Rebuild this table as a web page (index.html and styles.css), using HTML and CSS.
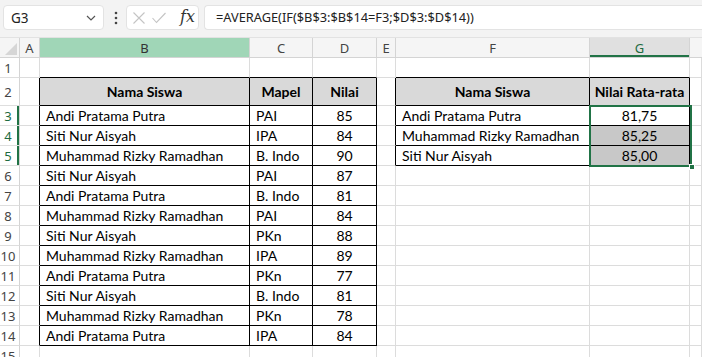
FILE: index.html
```html
<!DOCTYPE html>
<html>
<head>
<meta charset="utf-8">
<link rel="stylesheet" href="styles.css">
</head>
<body>
<div class="app">
  <div class="toolbar">
    <div class="namebox">
      <span class="ref">G3</span>
      <svg class="chev" width="10" height="6" viewBox="0 0 10 6"><path d="M1 1 L5 5 L9 1" fill="none" stroke="#555" stroke-width="1.2"/></svg>
    </div>
    <svg class="dots" width="4" height="14" viewBox="0 0 4 14"><circle cx="2" cy="2" r="1.3" fill="#444"/><circle cx="2" cy="7" r="1.3" fill="#444"/><circle cx="2" cy="12" r="1.3" fill="#444"/></svg>
    <div class="fxbox">
      <svg width="14" height="12" viewBox="0 0 14 12"><path d="M1.5 0.5 L12.5 11.5 M12.5 0.5 L1.5 11.5" stroke="#c4c4c4" stroke-width="1.1" fill="none"/></svg>
      <svg width="14" height="12" viewBox="0 0 14 12"><path d="M0.5 6 L4.5 10.5 L13.5 1" stroke="#c4c4c4" stroke-width="1.1" fill="none"/></svg>
      <span class="fx">fx</span>
    </div>
    <div class="formula">=AVERAGE(IF($B$3:$B$14=F3;$D$3:$D$14))</div>
  </div>

  <div class="sheet">
    <!-- header row -->
    <div class="corner"><svg width="12" height="12" viewBox="0 0 12 12"><path d="M12 0 L12 12 L0 12 Z" fill="#d6d6d6"/></svg></div>
    <div class="ch">A</div>
    <div class="ch hl">B</div>
    <div class="ch">C</div>
    <div class="ch">D</div>
    <div class="ch">E</div>
    <div class="ch">F</div>
    <div class="ch sel">G</div>
    <div class="ch last"></div>

    <!-- row 1 -->
    <div class="rh">1</div>
    <div class="c"></div>
    <div class="c kb"></div>
    <div class="c kb"></div>
    <div class="c kb"></div>
    <div class="c"></div>
    <div class="c kb"></div>
    <div class="c kb"></div>
    <div class="c"></div>

    <!-- row 2 -->
    <div class="rh">2</div>
    <div class="c kr"></div>
    <div class="c k hd">Nama Siswa</div>
    <div class="c k hd">Mapel</div>
    <div class="c k hd">Nilai</div>
    <div class="c kr"></div>
    <div class="c k hd">Nama Siswa</div>
    <div class="c k hd">Nilai Rata-rata</div>
    <div class="c"></div>

    <!-- row 3 -->
    <div class="rh on">3</div>
    <div class="c kr"></div>
    <div class="c k t">Andi Pratama Putra</div>
    <div class="c k t">PAI</div>
    <div class="c k n">85</div>
    <div class="c kr"></div>
    <div class="c k t">Andi Pratama Putra</div>
    <div class="c k n">81,75</div>
    <div class="c"></div>

    <!-- row 4 -->
    <div class="rh on">4</div>
    <div class="c kr"></div>
    <div class="c k t">Siti Nur Aisyah</div>
    <div class="c k t">IPA</div>
    <div class="c k n">84</div>
    <div class="c kr"></div>
    <div class="c k t">Muhammad Rizky Ramadhan</div>
    <div class="c k n shade">85,25</div>
    <div class="c"></div>

    <!-- row 5 -->
    <div class="rh on">5</div>
    <div class="c kr"></div>
    <div class="c k t">Muhammad Rizky Ramadhan</div>
    <div class="c k t">B. Indo</div>
    <div class="c k n">90</div>
    <div class="c kr"></div>
    <div class="c k t">Siti Nur Aisyah</div>
    <div class="c k n shade">85,00</div>
    <div class="c"></div>

    <!-- row 6 -->
    <div class="rh">6</div>
    <div class="c kr"></div>
    <div class="c k t">Siti Nur Aisyah</div>
    <div class="c k t">PAI</div>
    <div class="c k n">87</div>
    <div class="c"></div>
    <div class="c"></div>
    <div class="c"></div>
    <div class="c"></div>

    <!-- row 7 -->
    <div class="rh">7</div>
    <div class="c kr"></div>
    <div class="c k t">Andi Pratama Putra</div>
    <div class="c k t">B. Indo</div>
    <div class="c k n">81</div>
    <div class="c"></div>
    <div class="c"></div>
    <div class="c"></div>
    <div class="c"></div>

    <!-- row 8 -->
    <div class="rh">8</div>
    <div class="c kr"></div>
    <div class="c k t">Muhammad Rizky Ramadhan</div>
    <div class="c k t">PAI</div>
    <div class="c k n">84</div>
    <div class="c"></div>
    <div class="c"></div>
    <div class="c"></div>
    <div class="c"></div>

    <!-- row 9 -->
    <div class="rh">9</div>
    <div class="c kr"></div>
    <div class="c k t">Siti Nur Aisyah</div>
    <div class="c k t">PKn</div>
    <div class="c k n">88</div>
    <div class="c"></div>
    <div class="c"></div>
    <div class="c"></div>
    <div class="c"></div>

    <!-- row 10 -->
    <div class="rh">10</div>
    <div class="c kr"></div>
    <div class="c k t">Muhammad Rizky Ramadhan</div>
    <div class="c k t">IPA</div>
    <div class="c k n">89</div>
    <div class="c"></div>
    <div class="c"></div>
    <div class="c"></div>
    <div class="c"></div>

    <!-- row 11 -->
    <div class="rh">11</div>
    <div class="c kr"></div>
    <div class="c k t">Andi Pratama Putra</div>
    <div class="c k t">PKn</div>
    <div class="c k n">77</div>
    <div class="c"></div>
    <div class="c"></div>
    <div class="c"></div>
    <div class="c"></div>

    <!-- row 12 -->
    <div class="rh">12</div>
    <div class="c kr"></div>
    <div class="c k t">Siti Nur Aisyah</div>
    <div class="c k t">B. Indo</div>
    <div class="c k n">81</div>
    <div class="c"></div>
    <div class="c"></div>
    <div class="c"></div>
    <div class="c"></div>

    <!-- row 13 -->
    <div class="rh">13</div>
    <div class="c kr"></div>
    <div class="c k t">Muhammad Rizky Ramadhan</div>
    <div class="c k t">PKn</div>
    <div class="c k n">78</div>
    <div class="c"></div>
    <div class="c"></div>
    <div class="c"></div>
    <div class="c"></div>

    <!-- row 14 -->
    <div class="rh">14</div>
    <div class="c kr"></div>
    <div class="c k t">Andi Pratama Putra</div>
    <div class="c k t">IPA</div>
    <div class="c k n">84</div>
    <div class="c"></div>
    <div class="c"></div>
    <div class="c"></div>
    <div class="c"></div>

    <!-- row 15 -->
    <div class="rh">15</div>
    <div class="c"></div>
    <div class="c"></div>
    <div class="c"></div>
    <div class="c"></div>
    <div class="c"></div>
    <div class="c"></div>
    <div class="c"></div>
    <div class="c"></div>

    <div class="selection"></div>
    <div class="handle"></div>
  </div>
</div>
</body>
</html>
```

FILE: styles.css
```css
* { box-sizing: border-box; }
html, body { margin: 0; padding: 0; background: #fff; }
body { width: 702px; height: 357px; overflow: hidden; }

.app { width: 702px; height: 357px; overflow: hidden; }

.toolbar {
  height: 38px;
  background: #f3f3f3;
  border-bottom: 1px solid #e2e2e2;
  display: flex;
  align-items: flex-start;
  padding: 5px 0 0 3px;
  font-family: "Noto Sans", "Open Sans", sans-serif;
  color: #222;
}
.namebox {
  width: 101px;
  height: 25px;
  background: #fff;
  border: 1px solid #e3e3e3;
  border-radius: 4px;
  display: flex;
  align-items: center;
  justify-content: space-between;
  padding: 0 7px 0 7px;
  font-size: 13.5px;
}
.chev { margin-top: 1px; }
.dots { margin: 6px 0 0 10px; }
.fxbox {
  margin-left: 8px;
  width: 73px;
  height: 25px;
  background: #fff;
  border: 1px solid #e3e3e3;
  border-radius: 4px;
  display: flex;
  align-items: center;
  gap: 6px;
  padding-left: 5px;
}
.fx {
  font-family: "DejaVu Serif", "Liberation Serif", serif;
  font-style: italic;
  font-size: 16px;
  color: #333;
  margin-left: 8px;
  margin-top: -2px;
}
.formula {
  margin-left: 5px;
  flex: 1;
  height: 25px;
  background: #fff;
  border: 1px solid #e3e3e3;
  border-right: none;
  border-radius: 4px 0 0 4px;
  padding-left: 11px;
  font-size: 12.8px;
  line-height: 23px;
}

.sheet {
  position: relative;
  display: grid;
  grid-template-columns: 20px 20px 210px 63px 64px 19px 194px 100px 1fr;
  grid-template-rows: 20px 20px 28px repeat(13, 20px);
  font-family: "Lato", "Liberation Sans", sans-serif;
  font-size: 14px;
  color: #000;
}

.corner {
  background: #f5f5f5;
  border-right: 1px solid #d4d4d4;
  border-bottom: 1px solid #d4d4d4;
  display: flex;
  align-items: flex-end;
  justify-content: flex-end;
  padding: 0 2px 2px 0;
}
.ch {
  background: #f5f5f5;
  border-right: 1px solid #d4d4d4;
  border-bottom: 1px solid #d4d4d4;
  display: flex;
  align-items: center;
  justify-content: center;
  font-family: "Noto Sans", "Open Sans", sans-serif;
  font-size: 13px;
  color: #444;
}
.ch.last { border-right: none; }
.ch.hl { background: #a0d6b7; color: #333; }
.ch.sel { background: #e0e0e0; color: #1d6b40; box-shadow: inset 0 -2px 0 #217346; }

.rh {
  background: #fff;
  border-right: 1px solid #d4d4d4;
  border-bottom: 1px solid #dedede;
  display: flex;
  align-items: center;
  justify-content: center;
  padding-right: 3px;
  font-family: "Noto Sans", "Open Sans", sans-serif;
  font-size: 13px;
  color: #444;
}
.rh.on { color: #1d6b40; box-shadow: inset -2px 0 0 #217346; }

.c {
  border-right: 1px solid #dcdcdc;
  border-bottom: 1px solid #dcdcdc;
  display: flex;
  align-items: center;
  white-space: nowrap;
  overflow: hidden;
}
.c.k { border-right-color: #000; border-bottom-color: #000; }
.c.kr { border-right-color: #000; }
.c.kb { border-bottom-color: #000; }
.c.hd { background: #d9d9d9; font-weight: 700; justify-content: center; }
.c.t { padding-left: 6px; }
.c.n { justify-content: center; }
.c.shade { background: #c8c8c8; }

.selection {
  position: absolute;
  left: 589px;
  top: 67px;
  width: 103px;
  height: 62px;
  border: 2px solid #217346;
  pointer-events: none;
}
.handle {
  position: absolute;
  left: 689px;
  top: 126px;
  width: 6px;
  height: 6px;
  background: #217346;
  border: 1px solid #fff;
}
```
